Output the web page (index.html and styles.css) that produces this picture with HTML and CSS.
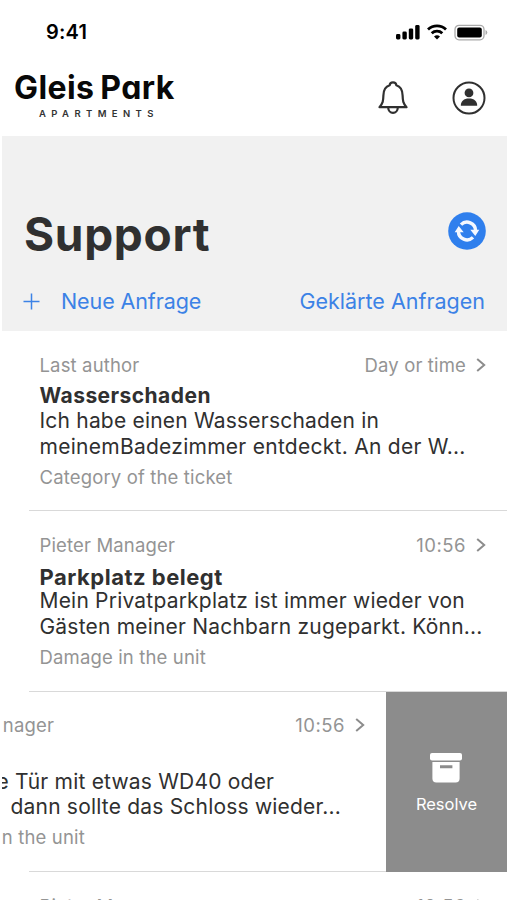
FILE: index.html
```html
<!DOCTYPE html>
<html lang="de">
<head>
<meta charset="utf-8">
<title>Gleis Park Apartments – Support</title>
<link rel="stylesheet" href="styles.css">
</head>
<body>
<div class="screen">
  <div class="status">
    <span class="clock">9:41</span>
    <div class="status-icons">
      <svg width="24" height="16" viewBox="0 0 24 16"><rect x="0" y="10" width="4.4" height="5.4" rx="1.4"/><rect x="6.4" y="7.6" width="4.4" height="7.8" rx="1.4"/><rect x="12.8" y="4.4" width="4.4" height="11" rx="1.4"/><rect x="19.2" y="1" width="4.4" height="14.4" rx="1.4"/></svg>
      <svg width="20" height="16" viewBox="0 0 20 16" fill="none" stroke="#000" stroke-width="2.8"><path d="M1 5.4a13 13 0 0 1 18 0"/><path d="M4.7 9.3a7.7 7.7 0 0 1 10.6 0"/><path d="M10 15.6l-3-3a4.3 4.3 0 0 1 6 0z" fill="#000" stroke="none"/></svg>
      <svg width="34" height="17" viewBox="0 0 34 17"><rect x="1" y="1.4" width="29" height="14.4" rx="4" fill="none" stroke="#aaa" stroke-width="1.3"/><rect x="3.200" y="3.600" width="24.600" height="10" rx="2"/><path d="M31.500 6v5q1.800-.8 1.800-2.500T31.500 6z" fill="#aaa"/></svg>
    </div>
  </div>
  <header class="header">
    <div class="brand">
      <div class="brand-name">Gleis Park</div>
      <div class="brand-sub">APARTMENTS</div>
    </div>
    <div class="header-icons">
      <svg width="30" height="34" viewBox="0 0 30 34" fill="none" stroke="#303030" stroke-width="2.200" stroke-linejoin="round"><path d="M1.500 26.200C5 22 5.200 20 5.400 14.500C5.500 8.500 8 5.400 11.700 4.300C11.900 .4 18.100 .4 18.300 4.300C22 5.400 24.500 8.500 24.600 14.500C24.800 20 25 22 28.500 26.200Z"/><path d="M10.200 26.500a4.800 5.300 0 0 0 9.600 0"/></svg>
      <svg width="34" height="34" viewBox="0 0 34 34"><circle cx="17" cy="17" r="15.500" fill="none" stroke="#303030" stroke-width="2"/><circle cx="17" cy="11.900" r="4.400" fill="#303030"/><path d="M8.800 24.800c0-4.500 3-7.200 8.200-7.200s8.200 2.700 8.200 7.200z" fill="#303030"/></svg>
    </div>
  </header>
  <section class="hero">
    <div class="hero-top">
      <h1>Support</h1>
      <svg width="38" height="38" viewBox="0 0 38 38"><circle cx="19" cy="19" r="18.800" fill="#2f7fed"/><g fill="none" stroke="#f4f8ff" stroke-width="3.400"><path d="M13 12.600a8.600 8.600 0 0 1 14.600 6"/><path d="M25 25.400a8.600 8.600 0 0 1-14.600-6"/></g><path d="M22.300 17.800h9l-4 6.200zM15.700 20.200h-9l4-6.200z" fill="#f4f8ff"/></svg>
    </div>
    <nav class="actions">
      <a class="new"><svg width="17" height="17" viewBox="0 0 17 17" stroke="#3c82e6" stroke-width="1.500"><path d="M8.500 .5v16M.5 8.500h16"/></svg><span>Neue Anfrage</span></a>
      <a class="solved">Geklärte Anfragen</a>
    </nav>
  </section>
  <main>
    <article class="ticket">
      <div class="meta"><span>Last author</span><span class="when">Day or time<svg width="10" height="14" viewBox="0 0 10 14"><path d="M1.200 1l7 6-7 6"/></svg></span></div>
      <h2>Wasserschaden</h2>
      <p>Ich habe einen Wasserschaden in<br><span class="wide">meinemBadezimmer entdeckt. An der W...</span></p>
      <div class="category">Category of the ticket</div>
    </article>
    <article class="ticket">
      <div class="meta"><span>Pieter Manager</span><span class="when time">10:56<svg width="10" height="14" viewBox="0 0 10 14"><path d="M1.200 1l7 6-7 6"/></svg></span></div>
      <h2 class="low">Parkplatz belegt</h2>
      <p>Mein Privatparkplatz ist immer wieder von<br>Gästen meiner Nachbarn zugeparkt. Könn...</p>
      <div class="category">Damage in the unit</div>
    </article>
    <div class="swipe">
      <article class="ticket swiped">
        <div class="meta"><span>Pieter Manager</span><span class="when time">10:56<svg width="10" height="14" viewBox="0 0 10 14"><path d="M1.200 1l7 6-7 6"/></svg></span></div>
        <h2></h2>
        <p><span class="s1">e Tür mit etwas WD40 oder</span><br><span class="s2">dann sollte das Schloss wieder...</span></p>
        <div class="category">Damage in the unit</div>
      </article>
      <button class="resolve">
        <svg width="34" height="30" viewBox="0 0 34 30" fill="#fff"><rect x="1" y="0" width="32" height="7.600" rx="2"/><path fill-rule="evenodd" d="M3.400 9h27.200v16.500a4 4 0 0 1-4 4H7.400a4 4 0 0 1-4-4zM11 12.300v2.900h12.400v-2.900z"/></svg>
        <span>Resolve</span>
      </button>
    </div>
    <article class="ticket">
      <div class="meta"><span>Pieter Manager</span><span class="when time">10:56<svg width="10" height="14" viewBox="0 0 10 14"><path d="M1.200 1l7 6-7 6"/></svg></span></div>
    </article>
  </main>
</div>
</body>
</html>
```

FILE: styles.css
```css
* { box-sizing: border-box; }
html, body { margin: 0; height: 900px; overflow: hidden; background: #fff; }
body { font-family: Inter, "Liberation Sans", sans-serif; color: #303030; padding-left: 2px; }
svg { display: block; flex: none; }
h1, h2, p { margin: 0; }
.screen { width: 505px; height: 900px; overflow: hidden; display: flex; flex-direction: column; }
.status { height: 64px; flex: none; display: flex; justify-content: space-between; align-items: center; padding: 0 19px 0 44px; color: #000; }
.clock { font-size: 20px; font-weight: 600; letter-spacing: .2px; }
.status-icons { display: flex; align-items: center; gap: 7px; }
.header { height: 72px; flex: none; display: flex; justify-content: space-between; padding: 0 21px 0 12px; }
.brand { color: #080808; width: 170px; padding-top: 2px; }
.brand-name { font-weight: 700; font-size: 32px; line-height: 43px; letter-spacing: .4px; word-spacing: -2px; white-space: nowrap; font-feature-settings: "cv11" 1; }
.brand-sub { font-size: 9.500px; line-height: 9px; font-weight: 600; letter-spacing: 5.400px; padding-left: 25px; color: #333; white-space: nowrap; }
.header-icons { display: flex; gap: 44px; padding-top: 17px; }
.hero { height: 195px; flex: none; background: #f1f1f1; display: flex; flex-direction: column; }
.hero-top { display: flex; justify-content: space-between; align-items: center; padding: 72px 21px 0 22px; height: 124px; }
.hero-top svg { margin-bottom: 6px; }
h1 { font-size: 46px; line-height: 56px; letter-spacing: .7px; }
.actions { display: flex; justify-content: space-between; align-items: center; padding: 11px 22px 0 21px; height: 84px; color: #3c82e6; font-size: 21.500px; letter-spacing: -.1px; }
.solved { letter-spacing: 0; }
.new { display: flex; align-items: center; gap: 21px; }
.ticket { height: 180.400px; padding: 20.500px 21px 0 37.500px; position: relative; }
.ticket::after { content: ""; position: absolute; left: 27px; right: 0; bottom: 0; height: 1px; background: #d9d9d9; }
.meta { display: flex; justify-content: space-between; height: 26px; line-height: 26px; font-size: 18.500px; color: #949494; letter-spacing: .15px; }
.when { display: flex; align-items: center; gap: 10px; }
.time { letter-spacing: .5px; }
.when path { fill: none; stroke: #8c8c8c; stroke-width: 2; }
h2 { font-size: 21px; line-height: 35px; height: 30.500px; letter-spacing: .45px; white-space: nowrap; }
.low { padding-top: 2px; font-size: 22px; letter-spacing: .5px; }
p { font-size: 21px; line-height: 25.700px; white-space: nowrap; height: 55.500px; letter-spacing: .2px; }
.wide { letter-spacing: .27px; }
.category { font-size: 18.500px; line-height: 26px; color: #949494; letter-spacing: .15px; }
.swipe { display: flex; height: 180.400px; overflow: hidden; position: relative; }
.swiped { width: 505px; margin-left: -121px; flex: none; position: static; }
.s1 { margin-left: 78px; }
.s2 { margin-left: 92px; }
.resolve { flex: none; width: 121px; height: 180.400px; border: 0; background: #8c8c8c; color: #fff; display: flex; flex-direction: column; align-items: center; justify-content: center; gap: 11px; font: 16.500px/20px Inter, sans-serif; padding: 4px 0 0; position: relative; z-index: 1; }
.resolve svg { margin-right: 1px; }
```
